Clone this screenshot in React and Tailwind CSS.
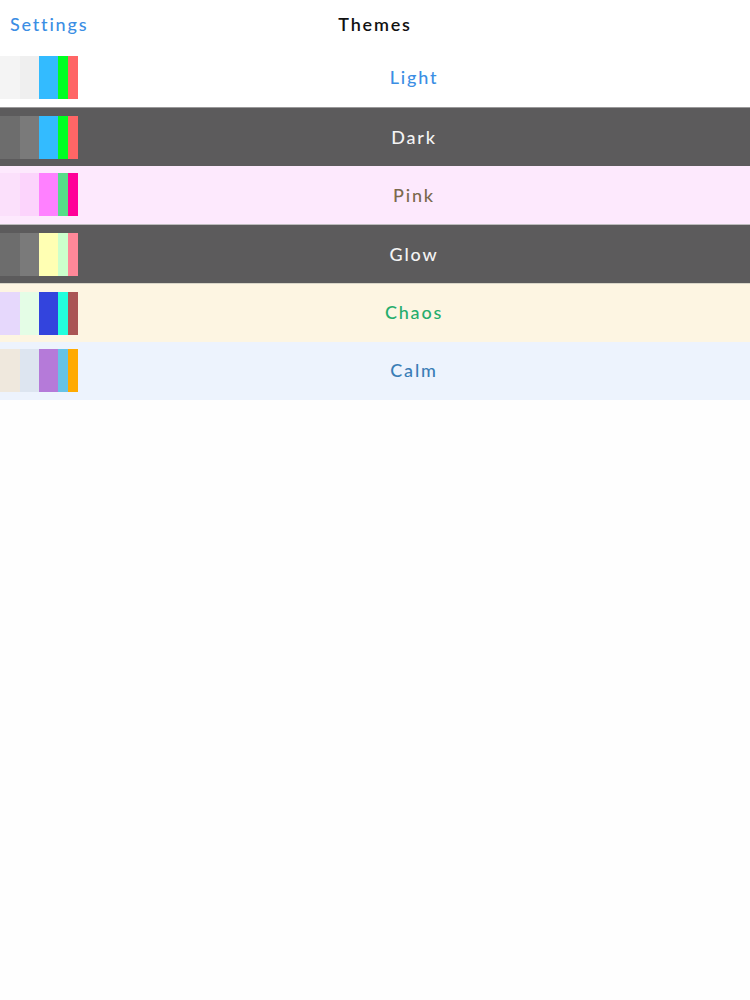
import React from "react";

const themes = [
  { name: "Light", bg: "bg-white", text: "text-[#3b8ee4]", sw: ["bg-[#f4f4f4]", "bg-[#efefef]", "bg-[#33bbff]", "bg-[#00ff22]", "bg-[#ff6666]"], border: "" },
  { name: "Dark", bg: "bg-[#5c5b5c]", text: "text-[#f4f4f4]", sw: ["bg-[#6d6d6d]", "bg-[#7a7a7a]", "bg-[#33bbff]", "bg-[#00ff22]", "bg-[#ff6666]"], border: "border-t border-[#9a999a]" },
  { name: "Pink", bg: "bg-[#fde9fd]", text: "text-[#7a6a4e]", sw: ["bg-[#fbe0fb]", "bg-[#fcd4fc]", "bg-[#ff80ff]", "bg-[#55dd88]", "bg-[#ff0099]"], border: "" },
  { name: "Glow", bg: "bg-[#5c5b5c]", text: "text-[#f4f4f4]", sw: ["bg-[#6d6d6d]", "bg-[#7a7a7a]", "bg-[#ffffb3]", "bg-[#ccffcc]", "bg-[#ff8899]"], border: "border-t border-[#bdbcbd]" },
  { name: "Chaos", bg: "bg-[#fdf5e2]", text: "text-[#25ad6c]", sw: ["bg-[#e6d8fc]", "bg-[#e4fde6]", "bg-[#3344dd]", "bg-[#22ffdd]", "bg-[#aa5555]"], border: "border-t border-[#d9d6c8]" },
  { name: "Calm", bg: "bg-[#edf3fd]", text: "text-[#3a7db6]", sw: ["bg-[#efe8dd]", "bg-[#dde5f0]", "bg-[#b57ad9]", "bg-[#66c3e6]", "bg-[#ffaa00]"], border: "" },
];

export default function App() {
  return (
    <div className="w-[750px] h-[1000px] bg-[#fefefe] font-['Lato',sans-serif]">
      <div className="relative h-[48.7px] flex items-center justify-center bg-white">
        <span className="absolute left-[10px] top-[12px] text-[18px] leading-[24px] tracking-[1.8px] font-medium text-[#3b8ee4]">Settings</span>
        <span className="text-[18px] leading-[24px] tracking-[1.8px] font-semibold text-[#111]">Themes</span>
      </div>
      {themes.map((t) => (
        <div key={t.name} className={`h-[58.6px] flex box-border ${t.bg} ${t.border}`}>
          <div className="flex h-[43px] mt-[7.6px]">
            <div className={`w-[19.5px] ${t.sw[0]}`} />
            <div className={`w-[19.5px] ${t.sw[1]}`} />
            <div className={`w-[19.3px] ${t.sw[2]}`} />
            <div className={`w-[10px] ${t.sw[3]}`} />
            <div className={`w-[9.7px] ${t.sw[4]}`} />
          </div>
          <div className={`flex-1 flex items-center justify-center text-[18px] tracking-[1.8px] font-medium ${t.text}`}>
            {t.name}
          </div>
        </div>
      ))}
    </div>
  );
}
